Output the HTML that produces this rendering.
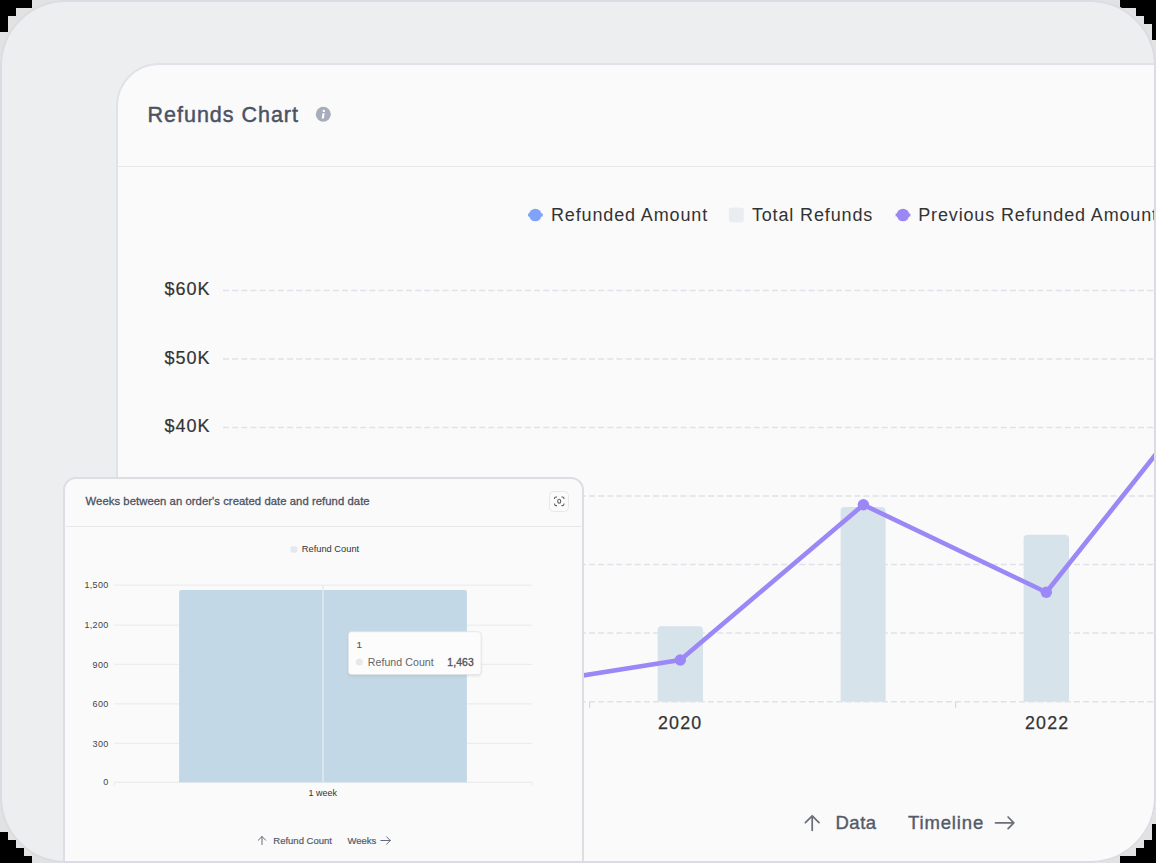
<!DOCTYPE html>
<html><head><meta charset="utf-8">
<style>
html,body{margin:0;padding:0}
body{width:1156px;height:863px;position:relative;overflow:hidden;background:#e2e2e2;font-family:"Liberation Sans",sans-serif}
.blk{position:absolute;background:#000}
#clip{position:absolute;left:0;top:0;width:1156px;height:863px;border-radius:66px;overflow:hidden;background:#edeef0}
#frameborder{position:absolute;left:0;top:0;width:1156px;height:863px;box-sizing:border-box;border:2.5px solid #dadce3;border-radius:66px}
#card{position:absolute;left:116.2px;top:62.8px;width:1200px;height:900px;box-sizing:border-box;border:2px solid #dfe2e7;border-radius:43px;background:#fafafa}
#small{position:absolute;left:62.5px;top:477px;width:521.5px;height:420px;box-sizing:border-box;border:2px solid #dcdee3;border-radius:13px;background:#fafafa}
svg{position:absolute;left:0;top:0}
</style></head>
<body>
<div class="blk" style="left:0;top:0;width:32px;height:8px"></div>
<div class="blk" style="left:0;top:8px;width:16px;height:8px"></div>
<div class="blk" style="left:0;top:16px;width:8px;height:16px"></div>
<div class="blk" style="left:1120px;top:0;width:36px;height:8px"></div>
<div class="blk" style="left:1136px;top:8px;width:20px;height:8px"></div>
<div class="blk" style="left:1144px;top:16px;width:12px;height:8px"></div>
<div class="blk" style="left:1152px;top:24px;width:4px;height:16px"></div>
<div class="blk" style="left:0;top:832px;width:8px;height:31px"></div>
<div class="blk" style="left:8px;top:840px;width:8px;height:23px"></div>
<div class="blk" style="left:16px;top:848px;width:8px;height:15px"></div>
<div class="blk" style="left:24px;top:856px;width:8px;height:7px"></div>
<div class="blk" style="left:1152px;top:824px;width:4px;height:39px"></div>
<div class="blk" style="left:1144px;top:840px;width:8px;height:23px"></div>
<div class="blk" style="left:1136px;top:848px;width:8px;height:15px"></div>
<div class="blk" style="left:1120px;top:856px;width:16px;height:7px"></div>

<div id="clip">
  <div id="card"></div>
  <svg width="1156" height="863" viewBox="0 0 1156 863" font-family="Liberation Sans, sans-serif">
    <!-- header -->
    <text x="147.6" y="121.8" font-size="21.5" fill="#4b5263" stroke="#4b5263" stroke-width="0.45" letter-spacing="0.98">Refunds Chart</text>
    <circle cx="323.3" cy="114.3" r="7.5" fill="#a8adbb"/>
    <circle cx="323.8" cy="110.9" r="1.2" fill="#fff"/><path d="M322.5 113.3 L324.7 113.3 L323.9 118.5 L321.7 118.5 Z" fill="#fff"/>
    <rect x="117" y="166" width="1040" height="1" fill="#e6e8eb"/>
    <!-- legend -->
    <rect x="528" y="213.6" width="14.8" height="2.8" fill="#7fa3f8"/>
    <circle cx="535.3" cy="215" r="6.3" fill="#7fa3f8"/>
    <text x="551" y="220.8" font-size="18" fill="#333" letter-spacing="0.86">Refunded Amount</text>
    <rect x="728.8" y="207.5" width="15" height="15" rx="3" fill="#e9edf1"/>
    <text x="751.9" y="220.8" font-size="18" fill="#333" letter-spacing="0.86">Total Refunds</text>
    <rect x="895.6" y="213.6" width="14.8" height="2.8" fill="#9b87f5"/>
    <circle cx="903" cy="215" r="6.3" fill="#9b87f5"/>
    <text x="918.2" y="220.8" font-size="18" fill="#333" letter-spacing="0.86">Previous Refunded Amount</text>
    <!-- y labels -->
    <g font-size="18" fill="#333" stroke="#333" stroke-width="0.2" text-anchor="end" letter-spacing="1">
      <text x="210.6" y="295.2">$60K</text>
      <text x="210.6" y="363.7">$50K</text>
      <text x="210.6" y="432.2">$40K</text>
    </g>
    <!-- grid -->
    <g stroke="#dfe2e9" stroke-width="1.4" stroke-dasharray="6 3.15">
      <line x1="223" y1="290.5" x2="1156" y2="290.5"/>
      <line x1="223" y1="359" x2="1156" y2="359"/>
      <line x1="223" y1="427.5" x2="1156" y2="427.5"/>
      <line x1="223" y1="496" x2="1156" y2="496"/>
      <line x1="223" y1="564.5" x2="1156" y2="564.5"/>
      <line x1="223" y1="633" x2="1156" y2="633"/>
    </g>
    <!-- bars -->
    <g fill="#d7e3eb">
      <path d="M657.6 701.8 V630.2 Q657.6 626.2 661.6 626.2 H699 Q703 626.2 703 630.2 V701.8 Z"/>
      <path d="M840.6 701.8 V511 Q840.6 507 844.6 507 H881.6 Q885.6 507 885.6 511 V701.8 Z"/>
      <path d="M1023.6 701.8 V538.8 Q1023.6 534.8 1027.6 534.8 H1065 Q1069 534.8 1069 538.8 V701.8 Z"/>
    </g>
    <line x1="223" y1="701.8" x2="1156" y2="701.8" stroke="#dfe2e9" stroke-width="1.4" stroke-dasharray="6 3.15"/>
    <g stroke="#cfd3d9" stroke-width="1">
      <line x1="589.7" y1="702" x2="589.7" y2="708"/>
      <line x1="955.7" y1="702" x2="955.7" y2="708"/>
    </g>
    <!-- line -->
    <polyline points="497.3,689.1 680.3,660 863.4,504.8 1046.3,592.3 1229.3,361.7" fill="none" stroke="#9b87f5" stroke-width="4.6" stroke-linejoin="round"/>
    <g fill="#9b87f5">
      <circle cx="680.3" cy="660" r="5.7"/>
      <circle cx="863.4" cy="504.8" r="5.7"/>
      <circle cx="1046.3" cy="592.3" r="5.7"/>
    </g>
    <!-- x labels -->
    <g font-size="17.8" fill="#333" stroke="#333" stroke-width="0.25" text-anchor="middle" letter-spacing="1.2">
      <text x="680.2" y="728.8">2020</text>
      <text x="1047.2" y="728.8">2022</text>
    </g>
    <!-- bottom axis titles -->
    <g stroke="#6c6f79" stroke-width="1.75" fill="none" stroke-linecap="round" stroke-linejoin="round">
      <path d="M812.2 830.3 V815.8 M805.4 822.6 L812.2 815.8 L819 822.6"/>
      <path d="M995.5 822.8 H1013.8 M1008.1 817 L1013.8 822.8 L1008.1 828.6"/>
    </g>
    <text x="835.5" y="829" font-size="18.5" fill="#545a69" stroke="#545a69" stroke-width="0.4" letter-spacing="0.5">Data</text>
    <text x="908" y="829" font-size="18.5" fill="#545a69" stroke="#545a69" stroke-width="0.4" letter-spacing="0.85">Timeline</text>
  </svg>

  <div id="small"></div>
  <svg width="1156" height="863" viewBox="0 0 1156 863" font-family="Liberation Sans, sans-serif">
    <text x="85.6" y="505.4" font-size="11.3" fill="#4b5263" stroke="#4b5263" stroke-width="0.3" letter-spacing="0.05">Weeks between an order's created date and refund date</text>
    <rect x="549.5" y="491.5" width="19" height="20" rx="4" fill="#fbfbfb" stroke="#e6e8eb" stroke-width="1"/>
    <g stroke="#5a5a5a" stroke-width="1.05" fill="none">
      <path d="M554.5 499 V498.5 Q554.5 497 556 497 H557 M561.5 497 H562.5 Q564 497 564 498.5 V499 M564 503.5 V504 Q564 505.6 562.5 505.6 H561.5 M557 505.6 H556 Q554.5 505.6 554.5 504 V503.5"/>
      <ellipse cx="559.2" cy="501.3" rx="1.5" ry="2.0"/>
    </g>
    <rect x="64" y="526" width="519" height="1" fill="#e6e8eb"/>
    <rect x="290.5" y="546.2" width="7" height="6.6" rx="2" fill="#e5e9ee"/>
    <text x="301.8" y="552.4" font-size="9.3" fill="#333">Refund Count</text>
    <g font-size="9" fill="#444" text-anchor="end" letter-spacing="0.3">
      <text x="108.5" y="588.3">1,500</text>
      <text x="108.5" y="628.3">1,200</text>
      <text x="108.5" y="667.5">900</text>
      <text x="108.5" y="707.1">600</text>
      <text x="108.5" y="746.5">300</text>
      <text x="108.5" y="785.4">0</text>
    </g>
    <g fill="#e8eaed">
      <rect x="114.3" y="584.6" width="418" height="1"/>
      <rect x="114.3" y="624.6" width="418" height="1"/>
      <rect x="114.3" y="663.8" width="418" height="1"/>
      <rect x="114.3" y="703.4" width="418" height="1"/>
      <rect x="114.3" y="742.8" width="418" height="1"/>
      <rect x="114.3" y="781.7" width="418" height="1.2"/>
      <rect x="114" y="782" width="1" height="3.5"/>
      <rect x="531.3" y="782" width="1" height="3.5"/>
    </g>
    <path d="M179.1 782.2 V592.1 Q179.1 590.1 181.1 590.1 H464.9 Q466.9 590.1 466.9 592.1 V782.2 Z" fill="#c3d8e6"/>
    <rect x="322.3" y="585" width="1.4" height="197.2" fill="#e6ecf2"/>
    <text x="322.8" y="796" font-size="9" fill="#333" text-anchor="middle">1 week</text>
    <!-- tooltip -->
    <defs><filter id="sh" x="-20%" y="-40%" width="140%" height="180%"><feGaussianBlur stdDeviation="1.5"/></filter></defs>
    <rect x="348.4" y="633" width="132.7" height="42.9" rx="3" fill="#000" opacity="0.10" filter="url(#sh)"/>
    <rect x="348.4" y="631.7" width="132.7" height="42.9" rx="3" fill="#fcfcfc" stroke="#e2e2e2" stroke-width="0.8"/>
    <text x="356.4" y="647.7" font-size="9.8" fill="#555" stroke="#555" stroke-width="0.15">1</text>
    <circle cx="359.3" cy="662" r="3.5" fill="#e6e8eb"/>
    <text x="367.8" y="665.5" font-size="10.6" fill="#666" letter-spacing="0.05">Refund Count</text>
    <text x="473.8" y="665.5" font-size="10.4" fill="#555" stroke="#555" stroke-width="0.35" text-anchor="end" letter-spacing="0.1">1,463</text>
    <!-- bottom titles -->
    <g stroke="#666b78" stroke-width="1" fill="none" stroke-linecap="round" stroke-linejoin="round">
      <path d="M262 844.5 V836.5 M258.3 840.2 L262 836.5 L265.7 840.2"/>
      <path d="M380.8 840.5 H390.3 M386.6 836.8 L390.3 840.5 L386.6 844.2"/>
    </g>
    <text x="273.3" y="843.6" font-size="9.5" fill="#545a69" stroke="#545a69" stroke-width="0.2">Refund Count</text>
    <text x="347.5" y="843.6" font-size="9.5" fill="#545a69" stroke="#545a69" stroke-width="0.2">Weeks</text>
  </svg>
</div>
<div id="frameborder"></div>
</body></html>
